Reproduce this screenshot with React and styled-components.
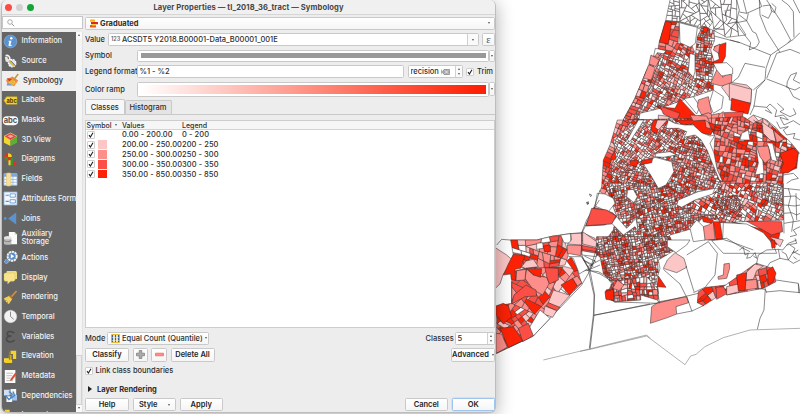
import React from "react";
import styled, { createGlobalStyle, css } from "styled-components";

const Global = createGlobalStyle`
  * { box-sizing: border-box; }
  body { margin: 0; background: #fff; overflow: hidden; }
`;

/* ---------- map ---------- */

const W = "#ffffff", P1 = "#fdc6c6", P2 = "#fd8e8a", P3 = "#fb4f46", P4 = "#fd2206";
const LINE = "#33302f";

const makeRandom = (seed) => {
  let s = seed;
  return () => {
    s = (s * 1664525 + 1013904223) % 4294967296;
    return s / 4294967296;
  };
};

const parse = (str) => str.trim().split(/\s+/).map((p) => p.split(",").map(Number));

const areaOf = (pts) => {
  let a = 0;
  pts.forEach(([x, y], i) => {
    const [u, v] = pts[(i + 1) % pts.length];
    a += x * v - u * y;
  });
  return Math.abs(a) / 2;
};

const halfPlane = (pts, cx, cy, nx, ny) => {
  const out = [];
  pts.forEach((p, i) => {
    const q = pts[(i + 1) % pts.length];
    const a = (p[0] - cx) * nx + (p[1] - cy) * ny;
    const b = (q[0] - cx) * nx + (q[1] - cy) * ny;
    if (a >= 0) out.push(p);
    if (a >= 0 !== b >= 0) {
      const t = a / (a - b);
      out.push([p[0] + (q[0] - p[0]) * t, p[1] + (q[1] - p[1]) * t]);
    }
  });
  return out;
};

const subdivide = (region, size, angle, seed, jitter = 0.25) => {
  const rnd = makeRandom(seed);
  const cells = [];
  const go = (pts, depth) => {
    if (pts.length < 3) return;
    const limit = size * size * (0.6 + rnd() * 1.3);
    if (areaOf(pts) < limit || depth > 13) {
      cells.push(pts);
      return;
    }
    const t = (angle * Math.PI) / 180;
    const ax = [Math.cos(t), Math.sin(t)];
    const bx = [-ax[1], ax[0]];
    const span = (d) => {
      const v = pts.map((p) => p[0] * d[0] + p[1] * d[1]);
      return [Math.min(...v), Math.max(...v)];
    };
    const [a0, a1] = span(ax);
    const [b0, b1] = span(bx);
    const along = a1 - a0 > (b1 - b0) * (0.8 + rnd() * 0.5);
    const f = 0.38 + rnd() * 0.24;
    const ca = along ? a0 + (a1 - a0) * f : (a0 + a1) / 2;
    const cb = along ? (b0 + b1) / 2 : b0 + (b1 - b0) * f;
    const cx = ca * ax[0] + cb * bx[0];
    const cy = ca * ax[1] + cb * bx[1];
    const r = t + (along ? 0 : Math.PI / 2) + (rnd() - 0.5) * jitter * 2;
    const nx = Math.cos(r), ny = Math.sin(r);
    go(halfPlane(pts, cx, cy, nx, ny), depth + 1);
    go(halfPlane(pts, cx, cy, -nx, -ny), depth + 1);
  };
  go(parse(region), 0);
  return cells;
};

const MIX = [[0.3, W], [0.47, P1], [0.7, P2], [0.88, P3], [1, P4]];
const REDS = [[0.05, W], [0.2, P1], [0.5, P2], [0.78, P3], [1, P4]];
const PALE = [[0.6, W], [0.78, P1], [0.92, P2], [0.97, P3], [1, P4]];
const BLANK = [[1, W]];

function Mesh({ region, size, angle = 0, seed = 1, mix = MIX, jitter, weight = 1.5 }) {
  const rnd = makeRandom(seed * 77 + 5);
  return (
    <g stroke={LINE} strokeWidth={weight}>
      {subdivide(region, size, angle, seed, jitter).map((c, i) => {
        const v = rnd();
        return (
          <polygon
            key={i}
            points={c.map((p) => p.map((n) => n.toFixed(1)).join(",")).join(" ")}
            fill={mix.find(([m]) => v <= m)[1]}
          />
        );
      })}
    </g>
  );
}

const Areas = ({ items }) => (
  <g stroke={LINE} strokeWidth="1.6" strokeLinejoin="round">
    {items.map(([fill, points], i) => <polygon key={i} fill={fill} points={points} />)}
  </g>
);

const Lines = ({ items, color = LINE }) => (
  <g stroke={color} strokeWidth="1.7" fill="none" strokeLinejoin="round">
    {items.map((d, i) => <polyline key={i} points={d} />)}
  </g>
);

const MapSvg = styled.svg`
  display: block;
  width: 304px;
  height: 414px;
`;

function TractMap() {
  return (
    <MapSvg viewBox="496 0 304 414">
      <rect x="496" y="0" width="304" height="414" fill="#fff" />
      {/* northern tracts */}
      <g transform="translate(580 0) scale(.33333)">
        <Mesh region="271,-4 298,-4 300,65 257,62" size={14} angle={8} seed={4} mix={BLANK} />
        <Mesh region="298,-4 385,-4 402,60 380,92 350,78 300,65" size={17} angle={30} seed={9} mix={BLANK} jitter={0.6} />
        <Mesh region="385,-4 470,-4 470,60 498,105 440,112 402,92 398,60" size={22} angle={15} seed={12} mix={BLANK} jitter={0.5} />
        <Lines items={[
          "470,0 478,30 468,70 490,100 512,128 508,150 530,140 538,126 528,100 518,95 500,62 478,45",
          "490,0 500,40 545,20 538,0", "470,68 500,62 505,40", "500,40 478,36",
          "538,0 540,45 560,95 600,157", "548,18 570,15 575,35 565,55 545,45", "575,10 588,22 584,38 574,32",
          "560,0 600,60 632,120 624,128", "605,0 625,15 640,35 642,112", "640,0 660,40",
          "450,120 480,128 572,165 640,118 660,98", "572,165 558,205 555,240 520,270",
          "555,202 495,190 475,232 455,248", "560,237 625,262 640,290 660,300",
          "555,240 530,268 522,320 510,345", "560,235 590,160 630,148 660,160",
          "622,245 632,225 650,218 640,240 660,250", "622,245 620,262 645,270 660,262",
          "520,318 560,322 570,312 590,330 585,350 610,345 625,360 600,352 612,375 640,362 660,375",
          "560,322 575,340 555,330", "592,310 612,328 600,335 630,350 648,342 640,325", "520,345 560,360 575,390",
        ]} />
        <Lines items={["257,62 300,66 350,82 402,108 480,128", "402,92 420,82 440,60 435,30", "295,66 302,130 328,136"]} />
        <Mesh region="257,63 298,68 294,130 270,165 232,158 238,125" size={19} angle={15} seed={21} mix={REDS} />
        <Areas items={[[P4, "256,64 275,68 265,132 238,127"], [W, "226,145 258,152 240,175 221,168"]]} />
        <Mesh region="368,78 385,85 402,92 404,120 392,150 404,190 395,240 350,238 345,180 352,110" size={10} angle={5} seed={33} mix={MIX} />
        <Areas items={[[P4, "372,80 384,84 380,100 368,95"], [P4, "402,140 438,128 436,170 425,192 402,198 400,185 418,178 414,155"], [P2, "404,140 420,132 416,160 400,150"]]} />
        <Mesh region="232,158 270,165 290,130 335,135 345,160 340,235 400,240 400,270 340,290 310,300 240,325 180,340 170,400 108,400 135,350 165,295 200,210" size={10.5} angle={28} seed={42} mix={MIX} />
        <Mesh region="221,168 240,175 225,215 195,290 165,345 150,400 112,392 160,305 190,235" size={15} angle={22} seed={24} mix={REDS} jitter={0.1} />
        <Areas items={[[P2, "213,165 238,180 228,200 207,192"], [P2, "206,194 226,203 214,240 190,235"]]} />
        <Lines items={["248,178 222,240 185,310 140,390", "254,180 230,240 192,310 150,390"]} color="#666" />
        <Areas items={[
          [W, "330,160 345,165 345,215 340,232 325,215"],
          [W, "298,68 352,82 346,130 330,142 300,128"],
          [W, "400,270 430,290 425,325 400,340 388,310"],
          [P4, "300,297 350,350 345,375 296,360 230,320 285,325"],
          [P3, "240,318 300,340 290,362 250,342"],
          [W, "312,296 340,290 360,320 350,342"],
          [P1, "235,345 268,350 255,385 235,375"],
          [W, "270,352 345,376 345,392 262,392"],
          [P2, "355,300 385,290 395,340 365,345 352,320"],
          [P1, "440,245 500,255 515,268 512,308 452,298 425,262"],
          [P1, "448,250 515,268 512,310 448,300"],
          [P2, "410,210 425,205 428,232 442,222 456,225 454,248 425,258 392,250"],
          [W, "400,190 440,188 458,205 458,222 425,228 410,210"],
          [P4, "455,295 512,310 504,342 452,330"],
          [P2, "345,352 385,338 405,350 430,335 425,395 345,395"],
          [P3, "432,338 490,335 482,375 440,378"],
          [P2, "395,345 418,340 410,370 420,392 390,392"],
          [P1, "520,345 560,390 498,395 500,360"],
        ]} />
      </g>
      {/* dense centre */}
      <g transform="translate(580 120) scale(.33333)">
        <Mesh region="112,0 190,0 145,80 100,135 100,190 128,260 60,215 65,200 70,120 90,75" size={15} angle={24} seed={51} mix={REDS} jitter={0.12} />
        <Mesh region="145,0 350,-5 390,70 300,130 225,110 180,130 150,200 95,185 95,130 135,80" size={9} angle={35} seed={56} />
        <Mesh region="300,60 375,50 420,170 440,210 400,205 350,215 300,240 270,200 190,200 100,190 150,140 185,125 280,120" size={9} angle={18} seed={61} />
        <Mesh region="75,190 280,190 300,245 400,220 425,200 500,260 470,300 410,300 370,290 340,325 270,345 250,395 50,395 100,330 110,290 90,235" size={8.5} angle={78} seed={70} />
        <Mesh region="380,-5 490,-10 520,10 550,-5 630,65 655,95 650,145 610,160 608,230 545,245 430,215 400,120 405,50" size={15} angle={12} seed={81} mix={REDS} />
        <Mesh region="430,190 608,190 610,300 420,308 410,285 330,280 345,235 420,215" size={12} angle={25} seed={88} />
        <Mesh region="530,205 605,190 608,260 560,240 530,225" size={9} angle={20} seed={91} mix={PALE} />
        <Mesh region="400,235 470,225 490,265 440,285 405,260" size={7} angle={20} seed={95} />
        <Mesh region="100,55 185,0 200,0 150,95 110,130" size={10} angle={35} seed={97} mix={PALE} />
        <Areas items={[
          [W, "175,0 192,0 150,65 142,60"],
          [P4, "285,0 375,0 378,22 400,30 392,45 360,38 340,12 310,15"],
          [P4, "220,0 240,0 230,42 212,30"],
          [P2, "330,-15 380,-12 390,10 375,0 340,3"],
          [P1, "232,0 262,0 235,30 225,22"],
          [W, "265,0 285,10 315,15 340,15 365,38 390,48 405,45 390,70 402,100 412,150 428,185 418,180 395,125 382,92 362,58 345,45 312,52 320,35 295,25 258,25"],
          [W, "190,132 225,112 275,125 282,155 258,195 235,205 212,165"],
          [W, "228,100 270,95 290,105 250,112 225,110"],
          [W, "143,210 160,208 172,230 162,248 140,230"],
          [W, "405,205 398,222 345,240 305,262 290,255 295,240 355,215"],
          [P4, "152,122 175,120 170,140 148,135"],
          [P4, "185,122 218,115 215,128 180,135"],
          [P1, "545,5 580,30 588,65 570,60 550,40"],
          [P2, "580,30 612,58 590,68"],
          [W, "560,68 578,70 585,100 592,125 575,120 568,90"],
          [P4, "600,100 640,85 655,98 648,140 625,158 598,160 610,130"],
          [W, "528,75 545,85 552,160 525,165 535,130"],
          [P2, "530,80 565,78 572,115 555,130 540,110"],
          [W, "485,40 505,30 510,60 480,60"],
          [W, "52,220 75,222 100,235 105,250 85,275 45,258"],
          [P3, "42,262 98,278 110,290 75,315 18,318"],
          [P2, "400,305 405,360 372,360 370,320 385,315"],
          [P4, "400,305 420,305 428,358 408,360"],
          [W, "370,320 375,360 340,365 330,325 350,300"],
          [P4, "455,306 600,340 590,375 550,345 500,315"],
          [P3, "500,304 605,305 608,335 575,345 540,325"],
          [P1, "570,350 610,360 600,380"],
          [W, "430,308 500,312 550,338 580,375 590,400 430,400 395,362 428,358"],
          [P4, "365,288 400,300 395,310 370,305"],
          [P1, "5,337 45,355 48,380 0,375"],
          [W, "110,290 95,310 130,345 165,320 175,335 168,295 140,325"],
        ]} />
        <Lines items={[
          "28,222 35,225 32,230 28,222", "20,248 25,245 25,252 20,248",
          "60,210 45,255 18,315 0,350",
          "610,190 612,340", "612,205 660,210", "612,230 645,228 660,240", "612,255 645,258 660,255", "612,280 635,278 650,285 660,280", "612,310 660,302",
          "625,205 632,230 625,258 640,300 635,335", "648,220 650,300", "660,60 640,55 645,40 620,45 610,30 625,20 600,25 590,5",
          "560,0 590,25 600,38", "655,98 660,100", "610,165 640,160 655,175 635,180 620,190",
          "550,20 520,0", "660,320 640,330 650,345 630,350", "645,355 650,370 620,375", "428,358 460,368 520,390",
        ]} />
      </g>
      {/* southern shore */}
      <g transform="translate(580 240) scale(.33333)">
        <Mesh region="50,-10 270,-10 285,30 235,60 240,85 230,120 236,160 150,180 78,175 95,130 70,100 60,50 40,40" size={8.6} angle={80} seed={103} />
        <Mesh region="100,125 200,110 232,145 235,178 105,185" size={13} angle={85} seed={107} />
        <Areas items={[
          [P4, "78,150 98,145 103,185 78,172"],
          [P2, "98,145 112,120 132,135 118,152"],
          [P4, "235,108 258,142 232,140"],
          [P1, "262,60 285,38 312,55 320,82 290,98 265,90 250,85"],
          [W, "262,0 330,0 320,15 288,38 262,20"],
          [W, "103,186 182,180 182,165 232,180 238,190"],
          [P2, "211,250 215,200 238,185 320,170 326,188 288,200 290,222 265,232"],
          [P1, "0,0 45,8 50,30 0,22"],
          [P3, "0,22 46,32 48,42 0,32"],
          [P4, "572,0 584,0 586,22 576,25"],
          [P2, "432,72 448,70 449,85 440,115 415,118 414,110 430,105"],
        ]} />
        <Mesh region="355,155 378,142 440,135 442,155 405,175 370,197 352,188" size={20} angle={60} seed={113} mix={REDS} />
        <Mesh region="430,140 465,115 520,75 530,70 578,85 588,125 550,145 440,165" size={21} angle={80} seed={119} mix={REDS} />
        <Areas items={[
          [P3, "408,142 430,140 442,160 410,178"],
          [P1, "440,140 475,132 478,155 440,165"],
          [P1, "498,98 525,72 550,78 530,92 520,118 498,120"],
          [P2, "495,122 530,118 532,145 495,150"],
          [P4, "470,105 500,98 495,152 475,152"],
          [P4, "562,92 578,80 588,100 580,125 565,135"],
        ]} />
        <Lines items={[
          "0,95 25,90 45,60", "25,90 42,165 42,226 30,328", "42,226 238,188 355,160", "25,90 60,102 98,125",
          "20,92 60,75", "20,82 60,60", "10,60 40,80",
          "232,140 238,190", "318,78 342,155", "250,88 300,132 318,168", "320,170 336,214", "290,222 336,213 372,196",
          "340,158 375,142 405,105 412,40 385,5 320,45", "385,0 440,-5 490,25 510,35",
          "478,30 490,22 495,45 505,40 500,55 512,52 525,38 530,55 520,48",
          "530,70 535,45 560,30 595,28 600,55 570,68 562,80", "595,28 608,30 625,10 650,0", "600,55 625,60 640,35 660,45",
          "605,35 618,42 625,60 640,70 660,60", "630,15 645,25 638,40 655,30", "640,50 650,58",
          "588,120 655,130 660,160", "558,156 600,152 660,158", "655,132 656,158",
          "556,145 552,210 540,235 532,268", "532,145 556,148 560,158",
        ]} />
        <Lines color="#777" items={["0,334 30,328 200,288 315,374 332,348 348,343 375,320 430,293 510,270 660,265"]} />
      </g>
      {/* western island */}
      <g transform="translate(490 200) scale(.33333)">
        <Lines items={["20,135 35,118 60,120 140,120 190,108 240,101 275,98 290,60 328,0", "275,98 320,130 325,150", "275,165 300,212 275,255 130,408 20,460", "300,212 314,285 310,346 298,445", "310,346 480,312", "300,212 325,215 370,240"]} />
        <Lines color="#777" items={["160,480 298,447 470,405 480,415"]} />
        <Mesh region="62,120 140,120 190,108 212,107 225,125 235,165 225,195 165,205 100,205 60,190 70,165" size={21} angle={10} seed={131} mix={REDS} jitter={0.4} />
        <Mesh region="65,215 110,205 225,200 262,210 275,250 180,345 130,360 65,310" size={29} angle={40} seed={137} mix={REDS} jitter={0.3} />
        <Mesh region="20,318 65,310 140,345 120,385 130,408 50,445 20,460" size={20} angle={40} seed={141} mix={REDS} jitter={0.3} />
        <Areas items={[
          [P1, "16,143 50,165 65,178 60,195 40,222 30,252 16,265"],
          [P4, "70,163 105,166 92,205 75,208 77,242 64,238 62,222 40,225 55,192"],
          [P1, "108,183 130,178 145,200 105,205 95,200"],
          [P2, "110,205 130,225 170,232 178,250 158,285 130,270 105,235"],
          [P4, "108,206 155,206 152,232 132,225"],
          [P3, "165,203 205,205 205,240 178,252 170,230"],
          [P3, "72,285 108,255 138,270 140,288 105,290 65,312"],
          [P2, "80,212 108,208 105,240 78,242"],
          [W, "140,130 158,128 160,145 140,148"],
          [P4, "160,138 180,135 182,155 163,155"],
          [W, "212,105 242,101 242,130 222,128"],
          [P1, "242,101 275,100 275,135 232,132 245,120"],
          [P2, "232,135 275,137 272,167 232,160"],
          [P1, "278,95 320,125 318,142 278,132"],
          [P3, "275,136 318,145 320,155 276,148"],
          [W, "275,152 320,160 318,170 276,165"],
          [P4, "230,182 244,172 264,210 254,215"],
          [W, "236,170 275,170 295,205 268,222 250,175"],
          [P4, "213,255 248,235 262,258 238,285"],
          [P2, "248,235 262,228 276,248 262,258"],
          [P1, "190,270 240,286 205,325 175,308"],
          [P3, "175,308 210,322 200,332 168,318"],
          [P1, "165,318 200,332 188,352 160,342"],
          [W, "115,388 150,330 180,355 130,408"],
          [P3, "85,385 115,370 130,407 98,425"],
          [P4, "30,385 70,380 98,422 55,443"],
          [P2, "18,400 35,402 52,442 18,460"],
          [P4, "18,318 40,310 55,318 65,350 40,372 18,345"],
          [P3, "288,77 305,25 350,30 378,48 365,72"],
          [P4, "345,275 370,268 372,302 348,298"],
        ]} />
        <Lines items={["276,100 275,165", "275,170 300,212", "318,150 300,210", "325,155 302,208", "283,168 318,185", "280,180 310,195", "290,7 296,10 292,14 290,7", "65,245 65,310"]} />
      </g>
    </MapSvg>
  );
}

/* ---------- dialog ---------- */

const Desktop = styled.div`
  display: flex;
  width: 800px;
  height: 414px;
  overflow: hidden;
  background: #fff;
  font-family: Inter, "Liberation Sans", sans-serif;
  font-size: 7.5px;
  font-weight: 500;
  line-height: 9px;
  color: #2e2e2e;
`;
const Dialog = styled.div`
  position: relative;
  z-index: 1;
  flex: none;
  width: 495px;
  height: 412.5px;
  margin-left: 1px;
  display: flex;
  flex-direction: column;
  background: #ededed;
  border: 1px solid #bdbdbd;
  border-top: none;
  border-radius: 6px;
  overflow: hidden;
  box-shadow: 0 3px 18px rgba(0, 0, 0, 0.33);
`;
const TitleBar = styled.header`
  flex: none;
  height: 15px;
  display: grid;
  grid-template-columns: 80px 1fr 80px;
  align-items: center;
  background: #f1f0f0;
  border-bottom: 1px solid #d6d6d6;
  font-size: 7.6px;
  font-weight: 700;
  letter-spacing: 0.09px;
  color: #464646;
  text-align: center;
  white-space: nowrap;
`;
const Lights = styled.div`
  display: flex;
  gap: 4px;
  padding-left: 3px;
`;
const Light = styled.i`
  width: 7px;
  height: 7px;
  border-radius: 50%;
  background: ${(p) => p.$color};
`;
const Body = styled.div`
  flex: 1;
  min-height: 0;
  display: flex;
`;
const Side = styled.aside`
  flex: none;
  width: 81px;
  display: flex;
  flex-direction: column;
`;
const Search = styled.div`
  height: 13px;
  margin-top: 1px;
  padding: 1.5px 4px;
  background: #fff;
  border: 1px solid #c6c6c6;
`;
const SideBody = styled.div`
  flex: 1;
  min-height: 0;
  margin-top: 2.5px;
  display: flex;
`;
const Nav = styled.nav`
  width: 73.5px;
  background: #656565;
  overflow: hidden;
`;
const NavItem = styled.div`
  height: 19.7px;
  display: flex;
  align-items: center;
  gap: 4.5px;
  padding-left: ${(p) => (p.$on ? 3.5 : 2)}px;
  line-height: 8px;
  white-space: pre;
  letter-spacing: -0.05px;
  color: ${(p) => (p.$on ? "#333" : "#f1f1f1")};
  background: ${(p) => (p.$on ? "#efefef" : "transparent")};
`;
const NavIcon = styled.svg`
  flex: none;
  width: 13px;
  height: 13px;
  overflow: visible;
`;
const Scroll = styled.div`
  flex: 1;
  display: flex;
  flex-direction: column;
  justify-content: space-between;
  background: #f4f4f4;
  border-right: 1px solid #e2e2e2;
`;
const ScrollEnd = styled.div`
  height: 7px;
  display: grid;
  place-items: center;
  background: #fafafa;
`;
const Thumb = styled.div`
  height: 50px;
  margin-top: auto;
  background: #ececec;
  border: 1px solid #d2d2d2;
`;
const Main = styled.main`
  flex: 1;
  min-width: 0;
  padding: 2px 0 0 2px;
  display: flex;
  flex-direction: column;
`;
const box = css`
  background: linear-gradient(#fff, #f5f5f5);
  border: 1px solid #c9c9c9;
  border-radius: 1.5px;
`;
const Combo = styled.div`
  ${box}
  width: ${(p) => p.$w || "auto"};
  height: ${(p) => p.$h || 12.5}px;
  display: flex;
  align-items: center;
  gap: 2px;
  padding: 0 4px 0 3px;
  white-space: nowrap;
  > :last-child { margin-left: auto; }
`;
const Row = styled.div`
  flex: none;
  height: ${(p) => p.$h}px;
  display: flex;
  align-items: center;
  gap: ${(p) => p.$gap || 0}px;
  white-space: nowrap;
`;
const Label = styled.span`
  width: ${(p) => p.$w || "auto"};
  flex: none;
`;
const Field = styled.div`
  flex: ${(p) => (p.$w ? "none" : 1)};
  width: ${(p) => p.$w || "auto"};
  height: ${(p) => p.$h || 13}px;
  display: flex;
  align-items: center;
  padding-left: 1.5px;
  background: #fff;
  border: 1px solid #c9c9c9;
  border-radius: 1.5px;
  overflow: hidden;
`;
const Swash = styled.div`
  flex: 1;
  height: ${(p) => p.$h}px;
  margin: 0 2px 0 1px;
  background: ${(p) => p.$fill};
`;
const FieldText = styled.span`
  flex: 1;
  overflow: hidden;
  letter-spacing: ${(p) => p.$ls || 0}px;
`;
const TypeTag = styled.span`
  width: 11px;
  font-size: 5.5px;
  font-weight: 600;
  color: #666;
`;
const EndCap = styled.div`
  align-self: stretch;
  width: ${(p) => p.$w || 11}px;
  display: flex;
  flex-direction: column;
  align-items: center;
  justify-content: center;
  gap: 3px;
  border-left: 1px solid #d0d0d0;
  background: #fafafa;
`;
const Tri = styled.i`
  flex: none;
  width: 0;
  height: 0;
  border: 1.8px solid transparent;
  ${(p) => (p.$up ? "border-bottom: 2.4px solid #555; border-top: 0;" : "border-top: 2.4px solid #555; border-bottom: 0;")}
`;
const Button = styled.button`
  ${box}
  width: ${(p) => p.$w}px;
  height: 13.5px;
  padding: 0;
  display: flex;
  align-items: center;
  justify-content: center;
  gap: ${(p) => p.$gap || 0}px;
  font: inherit;
  font-weight: 600;
  color: #262626;
  ${(p) => p.$primary && "border-color: #9fc4ee; box-shadow: 0 0 0 0.5px #b9d5f3;"}
`;
const Slim = styled.div`
  ${box}
  width: 6px;
  height: ${(p) => p.$h}px;
  display: grid;
  place-items: center;
`;
const Check = styled.span`
  flex: none;
  width: 8px;
  height: 8px;
  display: grid;
  place-items: center;
  background: #fff;
  border: 1px solid #cfcfcf;
  border-radius: 1px;
`;
const Tabs = styled.div`
  flex: none;
  height: 16px;
  margin-top: 2px;
  display: flex;
  align-items: flex-end;
  border-bottom: 1px solid #c9c9c9;
`;
const Tab = styled.div`
  width: ${(p) => p.$w}px;
  height: ${(p) => (p.$on ? 15 : 14)}px;
  display: grid;
  place-items: center;
  border: 1px solid #c9c9c9;
  border-bottom: none;
  border-radius: 2px 2px 0 0;
  background: ${(p) => (p.$on ? "#f7f7f7" : "#e4e4e4")};
`;
const Table = styled.section`
  flex: none;
  height: 208.5px;
  margin-top: 4.5px;
  background: #fff;
  border: 1px solid #cdcdcd;
`;
const grid = css`
  display: grid;
  grid-template-columns: 36px 60px 1fr;
  align-items: center;
  white-space: nowrap;
`;
const Head = styled.div`
  ${grid}
  height: 9.5px;
  font-size: 7px;
  background: #f6f6f6;
  border-bottom: 1px solid #d4d4d4;
`;
const HeadSymbol = styled.span`
  display: flex;
  align-items: center;
  justify-content: space-between;
  padding: 0 5px 0 0.5px;
`;
const ClassRow = styled.div`
  ${grid}
  height: 9.8px;
  letter-spacing: 0.07px;
`;
const ClassSymbol = styled.span`
  display: flex;
  align-items: center;
  gap: 3px;
  padding-left: 1px;
`;
const Swatch = styled.i`
  width: 9px;
  height: 8.5px;
  background: ${(p) => p.$fill};
`;
const Spacer = styled.div`flex: 1;`;
const Arrow = styled.i`
  width: 0;
  height: 0;
  margin: 0 5px 0 3px;
  border: 3px solid transparent;
  border-left: 4px solid #222;
  border-right: 0;
`;
const Glyph = styled.svg`
  flex: none;
  width: ${(p) => p.$w || 10}px;
  height: ${(p) => p.$h || p.$w || 10}px;
`;
const Epsilon = styled.span`
  font-family: "Liberation Serif", serif;
  font-size: 11px;
  font-weight: 400;
  color: #555;
`;

const Tick = () => (
  <Check>
    <Glyph $w={6} viewBox="0 0 6 6"><path d="M1 3.2L2.4 5 5 .8" fill="none" stroke="#222" strokeWidth="1.1" /></Glyph>
  </Check>
);

const icons = {
  Information: <><circle cx="8" cy="8" r="7.8" fill="#5b92d0" stroke="#86b3e2" strokeWidth=".8" /><circle cx="9" cy="3.9" r="1.5" fill="#fff" /><path d="M5.6 7h3.6l-1.2 5c0 .8 1 .7 1.8 0l.2.7c-1.8 1.6-5 1.7-4.4-.6l1-4.1H5.4z" fill="#fff" /></>,
  Source: <><path d="M1 2l3 .4L5 5l3 1 6 7-2 2-7-6-3-1z" fill="#e8e8e8" /><path d="M2 1a3.5 3.5 0 0 1 5 4L14 12" stroke="#f5f5f5" strokeWidth="2" fill="none" /><circle cx="10" cy="10" r="4.6" fill="#d9e6f3" stroke="#fff" strokeWidth="1.4" strokeDasharray="2 1.2" /><path d="M6 7l7 7" stroke="#e8b834" strokeWidth="2.4" /><path d="M8 7l6 6" stroke="#333" strokeWidth=".8" /></>,
  Symbology: <><path d="M0 7l8-4 7 5-5 7-8-2z" fill="#ef8843" /><path d="M1 5l6 1-2 4z" fill="#d63a2d" /><path d="M3 10l6-4 3 5-5 4z" fill="#f3ce42" /><path d="M9 8l6-8" stroke="#c39436" strokeWidth="1.8" /><path d="M4 9l4-2 3 4-4 4z" fill="#e5b739" /><path d="M1 13h5" stroke="#6d9ed5" strokeWidth="2" /></>,
  Labels: <><path d="M0 8l3-4.5h13v9H3z" fill="#f6d734" stroke="#d5a914" strokeWidth=".6" /><text x="3.2" y="10.7" fontSize="7" fontWeight="700" fill="#4a3b00">abc</text></>,
  Masks: <><rect x="-1.5" y="2.7" width="19" height="11" rx="5" fill="#fafafa" /><text x="-.3" y="11.2" fontSize="9.3" fontWeight="700" fill="#555">abc</text></>,
  "3D View": <><path d="M8 0l8 4-8 5-8-5z" fill="#e8433a" stroke="#ffe9a0" strokeWidth=".7" /><path d="M0 4l8 5v7l-8-4z" fill="#f2d531" /><path d="M16 4L8 9v7l8-4z" fill="#5fae35" /><path d="M4 4l4-2 4 2-4 2z" fill="#f7a6a0" /></>,
  Diagrams: <><circle cx="5" cy="5" r="4.7" fill="#e33023" /><path d="M5 5V.3A4.7 4.7 0 0 1 9.7 5z" fill="#f5d42a" /><path d="M5 5H.3A4.7 4.7 0 0 0 5 9.7z" fill="#35963a" /><path d="M5.5 9h2.8v6H5.5z" fill="#f5d42a" /><path d="M8.3 6h3v9h-3z" fill="#35963a" /><path d="M11.3 10H15v6h-3.7z" fill="#e33023" /></>,
  Fields: <><path d="M0 1h16v14H0z" fill="#f6f9fc" stroke="#9fc0e4" /><path d="M0 1h16v3.5H0z" fill="#79a8dc" /><path d="M0 8h16M0 11.5h16M11 4v11" stroke="#8db3de" strokeWidth=".9" /><rect x="3" y="0" width="5.5" height="16" rx="1.5" fill="#f5dfa0" stroke="#e3c36d" strokeWidth=".8" /></>,
  "Attributes Form": <><path d="M0 0h16v16H0z" fill="#f3f7fb" stroke="#8fb4de" /><path d="M2 4h4M2 11.5h4" stroke="#5d8ec7" strokeWidth="1.5" /><path d="M7.5 2.3H14v4H7.5zM7.5 9.5H14v4H7.5z" fill="#fff" stroke="#6f9fd5" strokeWidth="1.2" /></>,
  Joins: <><circle cx="1.5" cy="8" r="1.7" fill="#5d93cd" /><path d="M5 8l10-7.5v15z" fill="#5d93cd" /></>,
  "Auxiliary\nStorage": <><path d="M6 0h7l3 3v12H6z" fill="#fafafa" /><path d="M13 0v3h3" fill="#ccc" /><path d="M0 7v7c0 2.4 9 2.4 9 0V7z" fill="#b9b9b9" /><ellipse cx="4.5" cy="7" rx="4.5" ry="2" fill="#e4e4e4" /><path d="M0 10c0 2.4 9 2.4 9 0" fill="none" stroke="#777" /></>,
  Actions: <><circle cx="10" cy="6.5" r="5.6" fill="#5b8fca" stroke="#f4f4f4" strokeWidth="2.4" strokeDasharray="2.8 .8" /><path d="M8.4 3.8l4.2 2.7-4.2 2.7z" fill="#fff" /><circle cx="3" cy="13" r="2.3" fill="#5b8fca" stroke="#a9c9ec" strokeWidth="1.2" strokeDasharray="1.4 .6" /></>,
  Display: <><path d="M4 0h11l1 2v7l-1 1H4L3 9V1z" fill="#f1dd80" /><path d="M1 2.5h11.5l1 1.5v7l-1.5 1.5H8L4.5 16v-3.5H1L0 11V4z" fill="#f8e48f" stroke="#d9bc4f" strokeWidth=".5" /></>,
  Rendering: <><path d="M9 7l6.5-7" stroke="#d6903d" strokeWidth="2" /><path d="M7 5l4 4-2 1-4-4z" fill="#a9732b" /><path d="M0 9l6-3 4 4-4 6-2-1 1-2-2 1-1-1 1-2-2 1z" fill="#f1cd5b" /></>,
  Temporal: <><circle cx="8" cy="8" r="7.7" fill="#f2f2f2" stroke="#d5d5d5" strokeWidth=".6" /><path d="M8 2v6l4 3.5" fill="none" stroke="#888" strokeWidth="1.2" /></>,
  Variables: <path d="M12.5 4C9 .5 3.500 1.500 4 5c.3 2 3 2.600 5 2.500C6 7.500 2.500 8.500 3 11.500c.6 4 7 4.200 10 .8" fill="none" stroke="#4b4b4b" strokeWidth="2" />,
  Elevation: <><path d="M8 1h7v10h-4V5H8z" fill="#f5d42a" /><path d="M0 10h6V6h3v9H0z" fill="#f8dc3e" /><path d="M6 2.500L8 1v14H6z" fill="#9c8112" /><path d="M1 12h9v4H1z" fill="#f8cf18" /></>,
  Metadata: <><path d="M1 0h13v16H1z" fill="#fbfbfb" /><path d="M3 4h8M3 7h7M3 10h5M3 13h8" stroke="#aaa" strokeWidth=".9" /><path d="M8 11l6-8 2 1.500-6 8-2.500 1z" fill="#dc4c37" /></>,
  Dependencies: <><path d="M0 1h7v7H0z" fill="#cfe1f4" /><path d="M8 0h7v7H8zM3 9h7v7H3z" fill="#f2f7fc" /><path d="M10 7h6v7h-6z" fill="#9fc3ea" /><path d="M2 8l4 5 4-3M6 3l4 3-2 5M11 3l2 5-4 3" fill="none" stroke="#4d86c6" strokeWidth="1.7" /></>,
  "Legend": <path d="M1 1h6v5H1z" fill="#f5d42a" />,
};

const classes = [
  [W, "0.00 - 200.00", "0 - 200"],
  [P1, "200.00 - 250.00", "200 - 250"],
  [P2, "250.00 - 300.00", "250 - 300"],
  [P3, "300.00 - 350.00", "300 - 350"],
  [P4, "350.00 - 850.00", "350 - 850"],
];

export default function App() {
  return (
    <Desktop>
      <Global />
      <Dialog>
        <TitleBar>
          <Lights><Light $color="#fb4b47" /><Light $color="#d2d0d0" /><Light $color="#12a536" /></Lights>
          <span>Layer Properties — tl_2018_36_tract — Symbology</span>
        </TitleBar>
        <Body>
          <Side>
            <Search>
              <Glyph $w={8} viewBox="0 0 8 8"><circle cx="3" cy="3" r="2.300" fill="none" stroke="#999" strokeWidth=".8" /><path d="M4.800 4.800L7.300 7.300" stroke="#999" strokeWidth="1" /></Glyph>
            </Search>
            <SideBody>
              <Nav>
                {Object.entries(icons).map(([name, art]) => (
                  <NavItem key={name} $on={name === "Symbology"}>
                    <NavIcon viewBox="0 0 16 16">{art}</NavIcon>{name}
                  </NavItem>
                ))}
              </Nav>
              <Scroll>
                <ScrollEnd><Tri $up /></ScrollEnd>
                <Thumb />
                <ScrollEnd><Tri /></ScrollEnd>
              </Scroll>
            </SideBody>
          </Side>
          <Main>
            <Combo $h={12.5}>
              <Glyph $w={9} viewBox="0 0 9 9"><path d="M1 .5h5v2.200H1z" fill="#f2b41e" /><path d="M2 3h7v2.300H2z" fill="#d62a20" /><path d="M1 6h6v2.500H1z" fill="#eb5b20" /><path d="M3 5h4v1.500H3z" fill="#f6d13c" /></Glyph>
              <b>Graduated</b>
              <Tri />
            </Combo>
            <Row $h={20} $gap={3.5}>
              <Row $h={13} as={Label} $w="48.500px">Value</Row>
              <Field>
                <TypeTag>123</TypeTag>
                <FieldText>ACSDT5 Y2018.B00001-Data_B00001_001E</FieldText>
                <EndCap><Tri /></EndCap>
              </Field>
              <Button $w={13}><Epsilon>ε</Epsilon></Button>
            </Row>
            <Row $h={12}>
              <Label $w="52px">Symbol</Label>
              <Field $h={12}><Swash $h={5} $fill="#989898" /></Field>
              <Slim $h={12}><Tri /></Slim>
            </Row>
            <Row $h={20}>
              <Label $w="52px">Legend format</Label>
              <Field $w="267px"><FieldText>%1 - %2</FieldText></Field>
              <Spacer />
              <Field $w="55px">
                <FieldText>recision (</FieldText>
                <Glyph $w={8} $h={6} viewBox="0 0 8 6"><path d="M2 .5h5.500v5H2L.3 3z" fill="#aaa" stroke="#777" strokeWidth=".6" /><path d="M3 1.500l3 3M6 1.500l-3 3" stroke="#fff" strokeWidth=".7" /></Glyph>
                <Row $h={11} $gap={5}><span /><EndCap $w={7}><Tri $up /><Tri /></EndCap></Row>
              </Field>
              <Row $h={13} $gap={3}><span /><Tick /><Label $w="18px">Trim</Label></Row>
            </Row>
            <Row $h={15.5}>
              <Label $w="52px">Color ramp</Label>
              <Field $h={15.5}><Swash $h={8.5} $fill="linear-gradient(90deg, #fff, #fd2206 97%)" /></Field>
              <Slim $h={14}><Tri /></Slim>
            </Row>
            <Tabs><Tab $w={39.5} $on>Classes</Tab><Tab $w={47}>Histogram</Tab></Tabs>
            <Table>
              <Head><HeadSymbol>Symbol<Tri /></HeadSymbol><span>Values</span><span>Legend</span></Head>
              {classes.map(([fill, values, legend]) => (
                <ClassRow key={values}>
                  <ClassSymbol><Tick /><Swatch $fill={fill} /></ClassSymbol>
                  <span>{values}</span><span>{legend}</span>
                </ClassRow>
              ))}
            </Table>
            <Row $h={20}>
              <Label $w="22px">Mode</Label>
              <Combo $w="102px" $h={13}>
                <Glyph $w={9} viewBox="0 0 9 9"><path d="M.5.500h8v8h-8z" fill="#fff6cf" stroke="#e2bd3c" /><path d="M1.500 1v7M4.500 1v7M7.500 1v7" stroke="#3a5f96" strokeWidth="1.300" strokeDasharray="2.500 .5" /></Glyph>
                <span>Equal Count (Quantile)</span>
                <Tri />
              </Combo>
              <Spacer />
              <Label $w="29.500px">Classes</Label>
              <Field $w="40px"><FieldText>5</FieldText><EndCap $w={7}><Tri $up /><Tri /></EndCap></Field>
            </Row>
            <Row $h={13.5} $gap={3.5}>
              <Button $w={44}>Classify</Button>
              <Button $w={15}><Glyph $w={9} viewBox="0 0 9 9"><path d="M3.200.5h2.600v2.700h2.700v2.600H5.800v2.700H3.200V5.800H.5V3.200h2.700z" fill="#aaa" stroke="#777" strokeWidth=".7" /></Glyph></Button>
              <Button $w={16}><Glyph $w={9} viewBox="0 0 9 9"><path d="M.5 3.200h8v2.600h-8z" fill="#ff8b85" stroke="#f2625b" strokeWidth=".7" /></Glyph></Button>
              <Button $w={44}>Delete All</Button>
              <Spacer />
              <Button $w={44} $gap={3}>Advanced<Tri /></Button>
            </Row>
            <Row $h={18} $gap={2.5}><Tick />Link class boundaries</Row>
            <Row $h={19}><Arrow /><b>Layer Rendering</b></Row>
            <Row $h={12} $gap={3.5}>
              <Button $w={44}>Help</Button>
              <Button $w={43.5} $gap={10}>Style<Tri /></Button>
              <Button $w={43.5}>Apply</Button>
              <Spacer />
              <Button $w={43.5}>Cancel</Button>
              <Button $w={43.5} $primary>OK</Button>
            </Row>
          </Main>
        </Body>
      </Dialog>
      <TractMap />
    </Desktop>
  );
}
